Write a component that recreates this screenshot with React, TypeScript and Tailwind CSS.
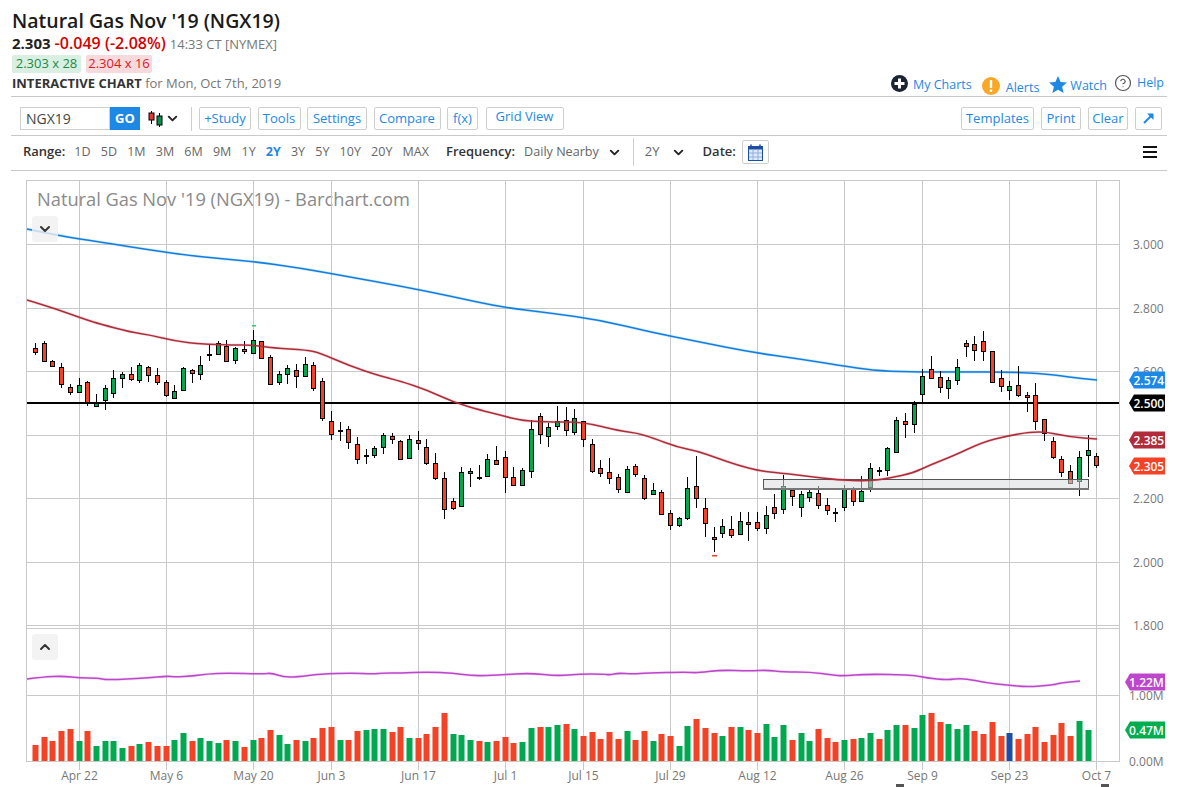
import { ChevronDown, ChevronUp, CircleHelp } from "lucide-react";

type Candle = [number, number, number, number, number, "r" | "g" | "k"];

// x, high, body top, body bottom, low, colour
const candles: Candle[] = [
  [35, 343, 348, 352, 355, "r"], [44, 341, 343, 361, 362, "r"], [52, 360, 361, 366, 366, "r"], [61, 363, 367, 384, 388, "r"],
  [70, 384, 387, 392, 395, "r"], [79, 378, 385, 392, 392, "g"], [87, 381, 382, 402, 406, "r"], [96, 394, 403, 406, 406, "g"],
  [105, 385, 388, 400, 410, "g"], [113, 370, 378, 393, 398, "g"], [122, 372, 374, 378, 388, "g"], [131, 367, 374, 379, 381, "r"],
  [139, 363, 365, 380, 383, "g"], [148, 366, 367, 375, 382, "r"], [157, 368, 375, 382, 385, "r"], [166, 380, 382, 395, 397, "r"],
  [174, 385, 391, 398, 398, "g"], [183, 367, 368, 390, 391, "g"], [192, 369, 370, 373, 383, "r"], [200, 356, 365, 374, 380, "g"],
  [209, 344, 354, 355, 361, "k"], [218, 341, 343, 354, 354, "g"], [226, 340, 346, 361, 361, "r"], [235, 347, 348, 360, 364, "g"],
  [244, 341, 349, 351, 354, "r"], [253, 330, 340, 353, 353, "g"], [261, 341, 341, 358, 359, "r"], [270, 355, 357, 384, 385, "r"],
  [279, 371, 374, 382, 385, "g"], [287, 365, 368, 374, 384, "g"], [296, 364, 370, 376, 388, "r"], [305, 357, 364, 376, 377, "g"],
  [313, 362, 365, 388, 391, "r"], [322, 378, 381, 418, 421, "r"], [331, 411, 421, 434, 440, "r"], [340, 422, 430, 431, 441, "k"],
  [348, 426, 429, 442, 449, "r"], [357, 437, 444, 459, 464, "r"], [366, 449, 455, 456, 464, "k"], [374, 446, 448, 455, 458, "g"],
  [383, 433, 435, 447, 454, "g"], [392, 433, 436, 439, 444, "r"], [400, 440, 441, 459, 459, "r"], [409, 435, 439, 458, 458, "g"],
  [418, 431, 440, 443, 450, "r"], [426, 439, 447, 463, 465, "r"], [435, 453, 463, 478, 480, "r"], [444, 472, 478, 509, 519, "r"],
  [453, 498, 501, 508, 510, "r"], [461, 467, 472, 506, 506, "g"], [470, 468, 471, 473, 487, "g"], [479, 465, 477, 478, 480, "k"],
  [487, 454, 459, 476, 477, "g"], [496, 446, 460, 464, 465, "r"], [505, 451, 457, 477, 493, "r"], [513, 467, 477, 485, 486, "r"],
  [522, 468, 470, 485, 485, "g"], [531, 420, 429, 471, 478, "g"], [540, 413, 416, 434, 444, "r"], [548, 423, 427, 436, 447, "g"],
  [557, 406, 421, 426, 430, "g"], [566, 407, 420, 430, 436, "r"], [574, 409, 418, 432, 435, "g"], [583, 421, 421, 439, 447, "r"],
  [592, 439, 444, 471, 473, "r"], [600, 460, 468, 473, 477, "r"], [609, 458, 472, 478, 484, "r"], [618, 474, 477, 489, 493, "r"],
  [627, 466, 469, 492, 493, "g"], [635, 464, 466, 474, 477, "r"], [644, 475, 478, 498, 500, "r"], [653, 483, 490, 494, 495, "g"],
  [661, 490, 492, 514, 515, "r"], [670, 510, 513, 525, 530, "r"], [679, 517, 518, 525, 527, "g"], [687, 477, 488, 518, 520, "g"],
  [696, 456, 486, 498, 508, "r"], [705, 498, 508, 523, 537, "r"], [714, 527, 537, 539, 552, "r"], [722, 519, 526, 533, 538, "g"],
  [731, 516, 529, 535, 538, "r"], [740, 512, 521, 534, 535, "g"], [748, 512, 522, 524, 541, "r"], [757, 512, 522, 528, 531, "r"],
  [766, 506, 515, 528, 534, "g"], [774, 494, 507, 513, 519, "r"], [783, 475, 486, 509, 514, "g"], [792, 489, 490, 496, 506, "r"],
  [801, 491, 494, 507, 517, "g"], [809, 489, 492, 497, 502, "g"], [818, 486, 493, 505, 509, "r"], [827, 498, 505, 510, 515, "r"],
  [835, 508, 512, 513, 522, "k"], [844, 485, 488, 507, 511, "g"], [853, 487, 489, 501, 506, "r"], [861, 476, 491, 501, 502, "g"],
  [870, 463, 468, 487, 492, "g"], [879, 467, 470, 471, 476, "k"], [887, 447, 448, 470, 476, "g"], [896, 417, 420, 452, 453, "g"],
  [905, 413, 421, 424, 438, "r"], [914, 401, 404, 424, 433, "g"], [922, 369, 376, 394, 403, "g"], [931, 356, 369, 378, 379, "r"],
  [940, 371, 377, 387, 393, "r"], [948, 377, 380, 388, 399, "g"], [957, 359, 367, 380, 385, "g"], [966, 340, 343, 346, 357, "r"],
  [974, 336, 344, 350, 361, "r"], [983, 331, 341, 351, 361, "r"], [992, 351, 351, 382, 383, "r"], [1001, 370, 378, 386, 392, "r"],
  [1009, 381, 386, 390, 400, "g"], [1018, 366, 385, 395, 397, "r"], [1027, 392, 395, 397, 412, "r"], [1035, 383, 395, 421, 430, "r"],
  [1044, 419, 419, 433, 441, "r"], [1053, 437, 441, 457, 459, "r"], [1061, 456, 459, 472, 477, "r"], [1070, 465, 471, 483, 484, "r"],
  [1079, 451, 457, 481, 496, "g"], [1088, 435, 450, 455, 477, "g"], [1096, 453, 456, 465, 468, "r"],
];

// top of each volume bar, same order as the candles
const volumes: [number, string][] = [
  [745, "r"], [737, "r"], [741, "r"], [731, "r"], [729, "r"], [741, "g"], [731, "r"], [746, "g"], [741, "g"], [741, "g"],
  [748, "g"], [746, "r"], [744, "g"], [742, "r"], [746, "r"], [746, "r"], [740, "g"], [733, "g"], [741, "r"], [738, "g"],
  [741, "g"], [743, "g"], [740, "r"], [741, "g"], [747, "r"], [740, "g"], [738, "r"], [730, "r"], [735, "g"], [744, "g"],
  [740, "r"], [741, "g"], [738, "r"], [728, "r"], [727, "r"], [740, "g"], [740, "r"], [731, "r"], [730, "g"], [729, "g"],
  [729, "g"], [732, "r"], [727, "r"], [738, "g"], [738, "r"], [734, "r"], [727, "r"], [713, "r"], [734, "g"], [735, "g"],
  [740, "g"], [741, "r"], [742, "g"], [741, "r"], [737, "r"], [743, "r"], [742, "g"], [728, "g"], [727, "r"], [727, "g"],
  [725, "g"], [724, "r"], [729, "g"], [736, "r"], [732, "r"], [739, "r"], [732, "r"], [739, "r"], [731, "g"], [740, "r"],
  [731, "r"], [741, "g"], [734, "r"], [736, "r"], [746, "g"], [726, "g"], [719, "r"], [728, "r"], [733, "r"], [736, "g"],
  [727, "r"], [727, "g"], [730, "r"], [733, "r"], [724, "g"], [737, "g"], [725, "g"], [740, "r"], [733, "g"], [741, "g"],
  [729, "r"], [738, "r"], [742, "r"], [740, "g"], [739, "r"], [738, "g"], [733, "g"], [739, "r"], [730, "g"], [725, "g"],
  [725, "r"], [728, "g"], [715, "g"], [713, "r"], [722, "r"], [724, "g"], [729, "g"], [725, "g"], [731, "r"], [734, "r"],
  [722, "r"], [736, "r"], [733, "b"], [739, "r"], [734, "r"], [727, "r"], [742, "r"], [735, "r"], [723, "r"], [736, "r"],
  [721, "g"], [730, "g"],
];

const blueLine: [number, number][] = [
  [27, 229], [60, 236], [100, 242], [150, 250], [200, 257], [250, 261], [300, 268], [350, 277], [400, 286], [450, 296], [500, 307],
  [550, 313], [600, 320], [650, 332], [700, 342], [750, 352], [800, 359], [850, 367], [880, 371], [922, 372], [963, 372], [1010, 372],
  [1047, 374], [1077, 378], [1097, 380],
];

const redLine: [number, number][] = [
  [27, 300], [50, 307], [70, 314], [87, 320], [100, 324], [130, 332], [150, 335], [175, 341], [200, 344], [233, 345], [253, 345], [273, 348],
  [307, 350], [320, 353], [350, 366], [380, 376], [400, 381], [427, 390], [453, 402], [480, 410], [500, 415], [523, 421], [553, 422],
  [583, 422], [620, 431], [637, 433], [653, 438], [677, 447], [697, 451], [717, 458], [737, 465], [760, 471], [780, 473], [807, 476],
  [837, 480], [870, 481], [890, 478], [913, 473], [930, 465], [953, 456], [983, 442], [1007, 436], [1030, 432], [1047, 432], [1070, 437],
  [1097, 439],
];

const purpleLine: [number, number][] = [
  [27, 679], [43, 677], [63, 676], [80, 678], [97, 678], [107, 680], [147, 678], [167, 676], [175, 677], [193, 676], [207, 674], [227, 673],
  [263, 674], [272, 673], [283, 677], [297, 677], [320, 674], [353, 673], [373, 674], [383, 673], [400, 673], [427, 672], [453, 673],
  [473, 676], [500, 675], [530, 673], [557, 676], [580, 674], [603, 674], [610, 675], [618, 673], [633, 674], [647, 673], [687, 672],
  [697, 673], [720, 670], [750, 671], [767, 670], [783, 672], [810, 672], [833, 675], [843, 676], [867, 674], [913, 675], [927, 678],
  [947, 680], [963, 678], [987, 683], [1007, 685], [1027, 687], [1053, 685], [1060, 683], [1080, 681],
];

const gridX = [79, 166, 253, 331, 418, 505, 583, 670, 757, 844, 922, 1009, 1096];
const gridY = [244, 308, 371, 435, 498, 562];
const dates = ["Apr 22", "May 6", "May 20", "Jun 3", "Jun 17", "Jul 1", "Jul 15", "Jul 29", "Aug 12", "Aug 26", "Sep 9", "Sep 23", "Oct 7"];
const axis: [string, number][] = [["3.000", 245], ["2.800", 309], ["2.600", 372], ["2.200", 499], ["2.000", 563], ["1.800", 626]];
const tags: [string, number, string][] = [["2.574", 380, "#1e88e5"], ["2.500", 403, "#000000"], ["2.385", 440, "#b02c3a"], ["2.305", 466, "#f34226"]];
const volTags: [string, number, string][] = [["1.22M", 682, "#bd46cc"], ["0.47M", 730, "#00ad4f"]];
const ranges = ["1D", "5D", "1M", "3M", "6M", "9M", "1Y", "2Y", "3Y", "5Y", "10Y", "20Y", "MAX"];
const fill = { r: "#f34226", g: "#00a84f", k: "#000000", b: "#1c4ea6" } as Record<string, string>;

// smooth a list of points through their midpoints
function smooth(pts: [number, number][]) {
  let d = `M${pts[0][0]} ${pts[0][1]}`;
  for (let i = 1; i < pts.length - 1; i++) {
    const mx = (pts[i][0] + pts[i + 1][0]) / 2;
    const my = (pts[i][1] + pts[i + 1][1]) / 2;
    d += ` Q${pts[i][0]} ${pts[i][1]} ${mx} ${my}`;
  }
  const last = pts[pts.length - 1];
  return `${d} L${last[0]} ${last[1]}`;
}

function MaLine({ pts, color }: { pts: [number, number][]; color: string }) {
  const d = smooth(pts);
  return (
    <g fill="none" stroke={color}>
      <path d={d} strokeWidth={3} strokeOpacity={0.15} />
      <path d={d} strokeWidth={1.6} />
    </g>
  );
}

function Chart() {
  const font = "'Open Sans', sans-serif";
  return (
    <svg width={1182} height={616} viewBox="0 171 1182 616" className="block">
      <text x={37} y={206} fontFamily={font} fontSize={18.25} fill="#8a8a8a">Natural Gas Nov '19 (NGX19) - Barchart.com</text>

      {/* grid */}
      <g stroke="#c9c9c9" strokeWidth={1}>
        {gridY.map((y) => <line key={y} x1={27} x2={1119} y1={y + 0.5} y2={y + 0.5} />)}
        {gridX.map((x) => <line key={x} x1={x + 0.5} x2={x + 0.5} y1={181} y2={770} />)}
        <line x1={27} x2={1119} y1={180.5} y2={180.5} />
        <line x1={27} x2={1119} y1={625.5} y2={625.5} />
        <line x1={27} x2={1119} y1={628.5} y2={628.5} />
        <line x1={27} x2={1119} y1={695.5} y2={695.5} />
        <line x1={27} x2={1119} y1={761.5} y2={761.5} />
        <line x1={26.5} x2={26.5} y1={180} y2={762} />
        <line x1={1119.5} x2={1119.5} y1={180} y2={762} />
      </g>

      {/* axis labels */}
      <g fontFamily={font} fontSize={12} fill="#777777">
        {axis.map(([t, y]) => <text key={t} x={1133} y={y + 4}>{t}</text>)}
        <text x={1129} y={700}>1.00M</text>
        <text x={1129} y={766}>0.00M</text>
        {dates.map((d, i) => <text key={d} x={gridX[i] + 0.5} y={780} textAnchor="middle">{d}</text>)}
      </g>

      <MaLine pts={blueLine} color="#0f7fe0" />
      <rect x={27} y={402} width={1092} height={2} fill="#000000" />

      {/* candles */}
      {candles.map(([x, hi, top, bottom, lo, c]) => (
        <g key={x}>
          <line x1={x + 0.5} x2={x + 0.5} y1={hi} y2={lo} stroke="#000000" strokeWidth={1} />
          <rect x={x - 1.5} y={top + 0.5} width={4} height={Math.max(bottom - top, 1)} fill={fill[c]} stroke="#000000" strokeWidth={1} />
        </g>
      ))}
      <rect x={252} y={325} width={4} height={1.5} fill="#2ecc71" />
      <rect x={712} y={555} width={5} height={1.5} fill="#f34226" />

      {/* support zone */}
      <rect x={763.5} y={479.5} width={325} height={9.5} fill="#d8dcdf" fillOpacity={0.55} stroke="#555555" strokeWidth={1} />
      <rect x={763} y={488} width={326} height={2} fill="#777777" />

      <MaLine pts={redLine} color="#b02c3a" />
      <MaLine pts={purpleLine} color="#bd46cc" />

      {/* volume */}
      {volumes.map(([top, c], i) => (
        <rect key={i} x={candles[i][0] - 2.5} y={top} width={6} height={761 - top} fill={fill[c]} />
      ))}

      {/* price tags */}
      <g fontFamily={font} fontSize={12} fontWeight={600} fill="#ffffff">
        {tags.map(([t, y, c]) => (
          <g key={t}>
            <polygon points={`1129,${y} 1134,${y - 8.5} 1165,${y - 8.5} 1165,${y + 8.5} 1134,${y + 8.5}`} fill={c} />
            <text x={1133.5} y={y + 4.5}>{t}</text>
          </g>
        ))}
        {volTags.map(([t, y, c]) => (
          <g key={t}>
            <polygon points={`1125,${y} 1130,${y - 8.5} 1165,${y - 8.5} 1165,${y + 8.5} 1130,${y + 8.5}`} fill={c} />
            <text x={1129} y={y + 4.5}>{t}</text>
          </g>
        ))}
      </g>

      <rect x={896} y={784} width={8} height={3} fill="#555555" />
      <rect x={1101} y={784} width={8} height={3} fill="#555555" />
    </svg>
  );
}

function ToolButton({ label, className }: { label: string; className: string }) {
  return (
    <div className={`flex h-[23px] items-center justify-center rounded-[2px] border border-[#cfcfcf] bg-white text-[13px] text-[#1e88e5] ${className}`}>
      {label}
    </div>
  );
}

function CandleIcon() {
  return (
    <svg width={17} height={18} viewBox="0 0 17 18" className="block">
      <line x1={4.5} x2={4.5} y1={1} y2={14} stroke="#000" />
      <rect x={2} y={3} width={5} height={7} fill="#e53935" stroke="#000" />
      <line x1={12.5} x2={12.5} y1={3} y2={17} stroke="#000" />
      <rect x={10} y={6} width={5} height={9} fill="#0a8f4a" stroke="#000" />
    </svg>
  );
}

export default function App() {
  return (
    <div className="h-[787px] w-[1182px] overflow-hidden bg-white font-['Open_Sans',sans-serif] text-[#333]">
      <div className="mx-[11px] w-[1156px]">
        {/* quote header */}
        <div className="flex h-[97px] items-start justify-between border-b border-[#c9c9c9] pt-[7px]">
          <div className="pl-[1px]">
            <div className="text-[19.5px] leading-[27px] font-semibold text-[#1a1a1a]">Natural Gas Nov '19 (NGX19)</div>
            <div className="flex h-[20px] items-baseline leading-[18px]">
              <span className="text-[15px] font-bold text-[#222]">2.303</span>
              <span className="ml-[4px] text-[16px] font-semibold text-[#d40000]">-0.049 (-2.08%)</span>
              <span className="ml-[4px] text-[13px] text-[#777]">14:33 CT [NYMEX]</span>
            </div>
            <div className="mt-[1px] flex gap-[5px]">
              <span className="flex h-[18px] w-[69px] items-center justify-center rounded-[2px] bg-[#d9efe2] text-[13px] text-[#1f8a45]">2.303 x 28</span>
              <span className="flex h-[18px] w-[66px] items-center justify-center rounded-[2px] bg-[#f8d9dc] text-[13px] text-[#d92027]">2.304 x 16</span>
            </div>
            <div className="mt-[1px] text-[13px] leading-[18px] text-[#777]">
              <span className="font-bold text-[#333]">INTERACTIVE CHART</span> for Mon, Oct 7th, 2019
            </div>
          </div>
          <div className="mt-[66px] flex items-start pr-[3px] text-[12.5px] leading-[18px] text-[#1e88e5]">
            <svg width={17} height={17} viewBox="0 0 17 17" className="mt-[2px]">
              <circle cx={8.5} cy={8.5} r={8.5} fill="#1b2433" />
              <rect x={3.5} y={7} width={10} height={3} fill="#fff" />
              <rect x={7} y={3.5} width={3} height={10} fill="#fff" />
            </svg>
            <span className="ml-[5px] mt-[3px]">My Charts</span>
            <svg width={18} height={18} viewBox="0 0 18 18" className="ml-[10px] mt-[4px]">
              <circle cx={9} cy={9} r={9} fill="#f9a825" />
              <rect x={7.8} y={3} width={2.4} height={8} fill="#fff" />
              <rect x={7.8} y={12.5} width={2.4} height={2.4} fill="#fff" />
            </svg>
            <span className="ml-[6px] mt-[6px]">Alerts</span>
            <svg width={18} height={17} viewBox="0 0 18 17" className="ml-[10px] mt-[3px]">
              <polygon points="9,0 11.6,6 18,6.5 13.1,10.7 14.6,17 9,13.7 3.4,17 4.9,10.7 0,6.5 6.4,6" fill="#1e88e5" />
            </svg>
            <span className="ml-[3px] mt-[4px]">Watch</span>
            <CircleHelp size={18} strokeWidth={1.6} className="ml-[7px] mt-[1px] text-[#555]" />
            <span className="ml-[5px] mt-[1px]">Help</span>
          </div>
        </div>

        {/* toolbar */}
        <div className="flex h-[39px] items-center border-b border-[#c9c9c9] pt-[5px]">
          <div className="ml-[9px] flex h-[23px] w-[90px] items-center border border-[#cfcfcf] pl-[5px] text-[14px] text-[#444]">NGX19</div>
          <div className="flex h-[23px] w-[30px] items-center justify-center bg-[#1e88e5] text-[13px] font-bold text-white">GO</div>
          <div className="ml-[7px]"><CandleIcon /></div>
          <ChevronDown size={15} strokeWidth={3} className="ml-[1px] text-[#222]" />
          <div className="ml-[11px] h-[24px] w-px bg-[#cfcfcf]" />
          <div className="ml-[7px] flex gap-[6.5px]">
            <ToolButton label="+Study" className="w-[52px]" />
            <ToolButton label="Tools" className="w-[43px]" />
            <ToolButton label="Settings" className="w-[60px]" />
            <ToolButton label="Compare" className="w-[67px]" />
            <ToolButton label="f(x)" className="w-[31px]" />
            <ToolButton label="Grid View" className="ml-[1px] w-[78px] pb-[3px]" />
          </div>
          <div className="ml-auto mr-[5px] flex gap-[7px]">
            <ToolButton label="Templates" className="w-[73px]" />
            <ToolButton label="Print" className="w-[40px]" />
            <ToolButton label="Clear" className="w-[40px]" />
            <div className="flex h-[23px] w-[27px] items-center justify-center rounded-[2px] border border-[#cfcfcf]">
              <svg width={11} height={11} viewBox="0 0 11 11">
                <path d="M1 10 L8 3" stroke="#1e88e5" strokeWidth={2} />
                <polygon points="4,0.5 10.5,0.5 10.5,7" fill="#1e88e5" />
              </svg>
            </div>
          </div>
        </div>

        {/* range row */}
        <div className="flex h-[35px] items-center border-b border-[#c9c9c9] pb-[2px] text-[13px] text-[#666]">
          <span className="ml-[12px] font-semibold text-[#333]">Range:</span>
          <div className="ml-[9px] flex gap-[10.2px] text-[12.5px]">
            {ranges.map((r) => (
              <span key={r} className={r === "2Y" ? "font-bold text-[#1e88e5]" : ""}>{r}</span>
            ))}
          </div>
          <span className="ml-[17px] font-semibold text-[#333]">Frequency:</span>
          <span className="ml-[9px] text-[12.6px]">Daily Nearby</span>
          <ChevronDown size={15} strokeWidth={3} className="ml-[8px] text-[#222]" />
          <div className="ml-[11px] h-[28px] w-px bg-[#cfcfcf]" />
          <span className="ml-[11px]">2Y</span>
          <ChevronDown size={15} strokeWidth={3} className="ml-[11px] text-[#222]" />
          <span className="ml-[17px] font-semibold text-[#333]">Date:</span>
          <div className="ml-[6px] flex h-[24px] w-[27px] items-center justify-center rounded-[2px] border border-[#cfcfcf]">
            <svg width={15} height={17} viewBox="0 0 15 17">
              <rect x={0.5} y={2.5} width={14} height={14} fill="#dfe9f7" stroke="#1c4ea6" />
              <rect x={0.5} y={2.5} width={14} height={3} fill="#1c4ea6" />
              <path d="M3 0.5v3M12 0.5v3" stroke="#1c4ea6" strokeWidth={1.5} />
              <path d="M5 6v10M10 6v10M1 9h13M1 13h13" stroke="#8fb0e0" strokeWidth={1} />
            </svg>
          </div>
          <div className="ml-auto mr-[10px] flex w-[14px] flex-col gap-[2.5px]">
            <div className="h-[2.5px] bg-[#111]" />
            <div className="h-[2.5px] bg-[#111]" />
            <div className="h-[2.5px] bg-[#111]" />
          </div>
        </div>
      </div>

      {/* chart with the two collapse buttons over it */}
      <div className="relative">
        <Chart />
        <div className="absolute left-[32px] top-[45px] flex h-[26px] w-[26px] items-center justify-center rounded-[3px] bg-[#f0f0f0]/80">
          <ChevronDown size={16} strokeWidth={3} className="text-[#333]" />
        </div>
        <div className="absolute left-[32px] top-[463px] flex h-[26px] w-[26px] items-center justify-center rounded-[3px] bg-[#f0f0f0]/80">
          <ChevronUp size={16} strokeWidth={3} className="text-[#333]" />
        </div>
      </div>
    </div>
  );
}
